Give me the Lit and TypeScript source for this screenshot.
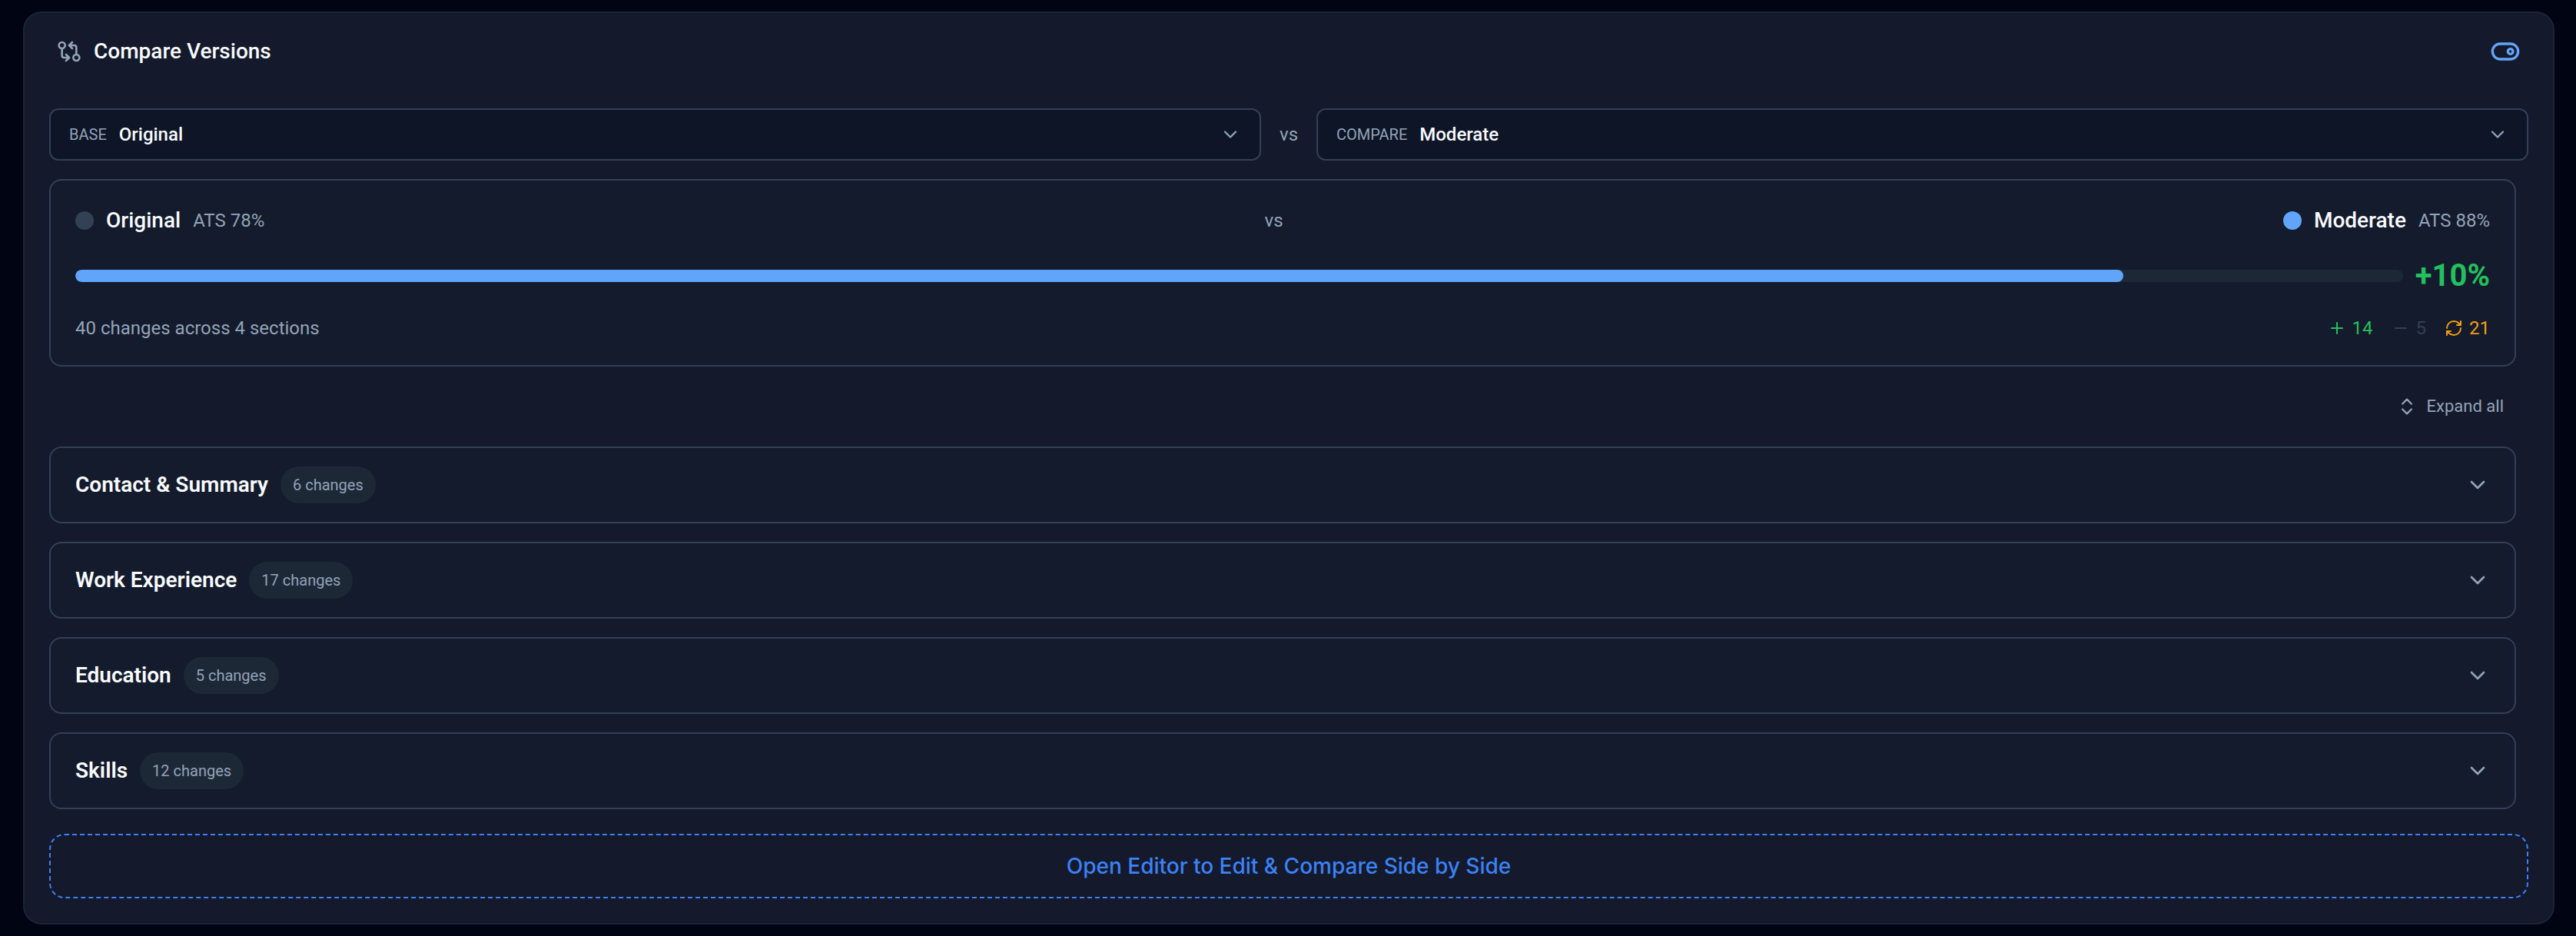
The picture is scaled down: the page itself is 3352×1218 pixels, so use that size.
import { LitElement, html, css, svg, type SVGTemplateResult } from "lit";
import { customElement, property, state } from "lit/decorators.js";

type IconName =
  | "compare"
  | "toggle"
  | "chevron"
  | "plus"
  | "minus"
  | "refresh"
  | "expand";

const ICONS: Record<IconName, SVGTemplateResult> = {
  compare: svg`<circle cx="5" cy="6" r="3"/><path d="M12 6h5a2 2 0 0 1 2 2v7"/><path d="m15 9-3-3 3-3"/><circle cx="19" cy="18" r="3"/><path d="M12 18H7a2 2 0 0 1-2-2V9"/><path d="m9 15 3 3-3 3"/>`,
  toggle: svg`<rect width="20" height="12" x="2" y="6" rx="6"/><circle cx="16" cy="12" r="2"/>`,
  chevron: svg`<path d="m6 9 6 6 6-6"/>`,
  plus: svg`<path d="M5 12h14"/><path d="M12 5v14"/>`,
  minus: svg`<path d="M5 12h14"/>`,
  refresh: svg`<path d="M3 12a9 9 0 0 1 9-9 9.75 9.75 0 0 1 6.74 2.74L21 8"/><path d="M21 3v5h-5"/><path d="M21 12a9 9 0 0 1-9 9 9.75 9.75 0 0 1-6.74-2.74L3 16"/><path d="M8 16H3v5"/>`,
  expand: svg`<path d="m7 15 5 5 5-5"/><path d="m7 9 5-5 5 5"/>`,
};

@customElement("line-icon")
class LineIcon extends LitElement {
  static styles = css`
    :host {
      display: block;
      flex: none;
      width: 24px;
      height: 24px;
    }
    .glyph {
      display: block;
      width: 100%;
      height: 100%;
      fill: none;
      stroke: currentColor;
      stroke-width: 2;
      stroke-linecap: round;
      stroke-linejoin: round;
    }
  `;

  @property() name: IconName = "chevron";

  render() {
    return html`<svg class="glyph" viewBox="0 0 24 24" aria-hidden="true">${ICONS[this.name]}</svg>`;
  }
}

interface Version {
  name: string;
  score: number;
}

interface Section {
  title: string;
  changes: number;
}

const VERSIONS: Version[] = [
  { name: "Original", score: 78 },
  { name: "Moderate", score: 88 },
];

const SECTIONS: Section[] = [
  { title: "Contact & Summary", changes: 6 },
  { title: "Work Experience", changes: 17 },
  { title: "Education", changes: 5 },
  { title: "Skills", changes: 12 },
];

const STATS = { added: 14, removed: 5, edited: 21 };

@customElement("app-root")
class AppRoot extends LitElement {
  static styles = css`
    :host {
      display: block;
      box-sizing: border-box;
      min-height: 100vh;
      padding: 15px 28px 15px 30px;
      background: #000413;
      color: #f8fafc;
      font-family: Roboto, "Liberation Sans", sans-serif;
      font-size: 24px;
      line-height: 32px;
    }
    *,
    *::before {
      box-sizing: border-box;
    }
    button,
    select {
      margin: 0;
      padding: 0;
      border: 0;
      background: none;
      color: inherit;
      font: inherit;
      cursor: pointer;
    }
    h2,
    h3,
    p {
      margin: 0;
      font: inherit;
    }

    .card {
      display: flex;
      flex-direction: column;
      padding: 0 32px 32px;
      border: 2px solid #1a2536;
      border-radius: 24px;
      background: #14192b;
    }
    .header {
      display: flex;
      align-items: center;
      justify-content: space-between;
      height: 100px;
      padding: 0 10px;
    }
    .heading {
      display: flex;
      align-items: center;
      gap: 16px;
      color: #94a3b8;
    }
    .title {
      color: #f8fafc;
      font-size: 28px;
      font-weight: 500;
      line-height: 40px;
    }
    .icon-lg {
      width: 32px;
      height: 32px;
    }
    .icon-md {
      width: 28px;
      height: 28px;
    }
    .switch {
      color: #60a5fa;
    }
    .icon-xl {
      width: 40px;
      height: 40px;
    }

    .pickers {
      display: flex;
      align-items: center;
      gap: 24px;
      padding: 24px 0;
    }
    .picker {
      display: flex;
      flex: 1;
      align-items: center;
      gap: 16px;
      height: 68px;
      padding: 0 24px;
      border: 2px solid #334155;
      border-radius: 12px;
      background: #0d1527;
      color: #94a3b8;
    }
    .picker-label {
      font-size: 20px;
      text-transform: uppercase;
    }
    .picker-select {
      flex: 1;
      min-width: 0;
      appearance: none;
      color: #f8fafc;
      font-weight: 500;
    }
    .muted {
      color: #94a3b8;
    }

    .results {
      display: flex;
      flex-direction: column;
      gap: 24px;
      padding-right: 16px;
    }
    .summary {
      display: flex;
      flex-direction: column;
      gap: 24px;
      padding: 32px;
      border: 2px solid #334155;
      border-radius: 16px;
      background: #131b2c;
    }
    .line {
      display: flex;
      align-items: center;
      justify-content: space-between;
      gap: 16px;
    }
    .version {
      display: flex;
      align-items: center;
      gap: 16px;
    }
    .dot {
      width: 24px;
      height: 24px;
      border-radius: 50%;
      background: #334155;
    }
    .dot-active {
      background: #60a5fa;
    }
    .version-name {
      font-size: 28px;
      font-weight: 500;
      line-height: 40px;
    }
    .track {
      flex: 1;
      height: 16px;
      overflow: hidden;
      border-radius: 8px;
      background: #1d2837;
    }
    .fill {
      height: 100%;
      border-radius: 8px;
      background: #60a5fa;
    }
    .delta {
      color: #23c05d;
      font-size: 40px;
      font-weight: 700;
      line-height: 56px;
    }
    .stats {
      display: flex;
      gap: 24px;
    }
    .stat {
      display: flex;
      align-items: center;
      gap: 8px;
    }
    .added {
      color: #23c05d;
    }
    .removed {
      color: #334155;
    }
    .edited {
      color: #f19e12;
    }

    .expand {
      display: flex;
      align-items: center;
      align-self: flex-end;
      gap: 12px;
      height: 56px;
      padding: 0 16px;
      color: #94a3b8;
      font-size: 22px;
    }
    .section {
      display: flex;
      align-items: center;
      justify-content: space-between;
      width: 100%;
      padding: 24px 32px;
      border: 2px solid #334155;
      border-radius: 16px;
      background: #131b2c;
      color: #94a3b8;
    }
    .section-info {
      display: flex;
      align-items: center;
      gap: 16px;
    }
    .section-title {
      color: #f8fafc;
      font-size: 28px;
      font-weight: 600;
      line-height: 40px;
    }
    .badge {
      padding: 8px 16px;
      border-radius: 24px;
      background: #1d2837;
      font-size: 20px;
    }
    .open {
      height: 84px;
      margin-top: 32px;
      border: 2px dashed #3b82f6;
      border-radius: 20px;
      color: #3b82f6;
      font-family: Inter, sans-serif;
      font-size: 28px;
      font-weight: 500;
    }
  `;

  @state() private enabled = true;
  @state() private base = VERSIONS[0].name;
  @state() private target = VERSIONS[1].name;

  private find(name: string): Version {
    return VERSIONS.find((v) => v.name === name) ?? VERSIONS[0];
  }

  private picker(id: string, label: string, value: string, onPick: (v: string) => void) {
    return html`
      <div class="picker">
        <label class="picker-label" for=${id}>${label}</label>
        <select
          class="picker-select"
          id=${id}
          @change=${(e: Event) => onPick((e.target as HTMLSelectElement).value)}
        >
          ${VERSIONS.map(
            (v) => html`<option value=${v.name} ?selected=${v.name === value}>${v.name}</option>`,
          )}
        </select>
        <line-icon class="icon-md" name="chevron"></line-icon>
      </div>
    `;
  }

  private version(v: Version, active: boolean) {
    return html`
      <div class="version">
        <span class=${active ? "dot dot-active" : "dot"}></span>
        <span class="version-name">${v.name}</span>
        <span class="muted">ATS ${v.score}%</span>
      </div>
    `;
  }

  private section(s: Section) {
    return html`
      <button class="section" type="button" aria-expanded="false">
        <span class="section-info">
          <span class="section-title">${s.title}</span>
          <span class="badge">${s.changes} changes</span>
        </span>
        <line-icon class="icon-lg" name="chevron"></line-icon>
      </button>
    `;
  }

  render() {
    const base = this.find(this.base);
    const target = this.find(this.target);
    const delta = target.score - base.score;
    const total = SECTIONS.reduce((sum, s) => sum + s.changes, 0);

    return html`
      <section class="card">
        <header class="header">
          <div class="heading">
            <line-icon class="icon-lg" name="compare"></line-icon>
            <h2 class="title">Compare Versions</h2>
          </div>
          <button
            class="switch"
            type="button"
            role="switch"
            aria-label="Compare versions"
            aria-checked=${this.enabled ? "true" : "false"}
            @click=${() => (this.enabled = !this.enabled)}
          >
            <line-icon class="icon-xl" name="toggle"></line-icon>
          </button>
        </header>

        <div class="pickers">
          ${this.picker("base", "Base", this.base, (v) => (this.base = v))}
          <span class="muted">vs</span>
          ${this.picker("compare", "Compare", this.target, (v) => (this.target = v))}
        </div>

        <div class="results">
          <div class="summary">
            <div class="line">
              ${this.version(base, false)}
              <span class="muted">vs</span>
              ${this.version(target, true)}
            </div>
            <div class="line">
              <div class="track">
                <div class="fill" style="width: ${target.score}%"></div>
              </div>
              <span class="delta">${delta >= 0 ? "+" : ""}${delta}%</span>
            </div>
            <div class="line">
              <p class="muted">${total} changes across ${SECTIONS.length} sections</p>
              <div class="stats">
                <span class="stat added"><line-icon name="plus"></line-icon>${STATS.added}</span>
                <span class="stat removed"><line-icon name="minus"></line-icon>${STATS.removed}</span>
                <span class="stat edited"><line-icon name="refresh"></line-icon>${STATS.edited}</span>
              </div>
            </div>
          </div>

          <button class="expand" type="button">
            <line-icon class="icon-md" name="expand"></line-icon>Expand all
          </button>

          ${SECTIONS.map((s) => this.section(s))}
        </div>

        <button class="open" type="button">Open Editor to Edit &amp; Compare Side by Side</button>
      </section>
    `;
  }
}
